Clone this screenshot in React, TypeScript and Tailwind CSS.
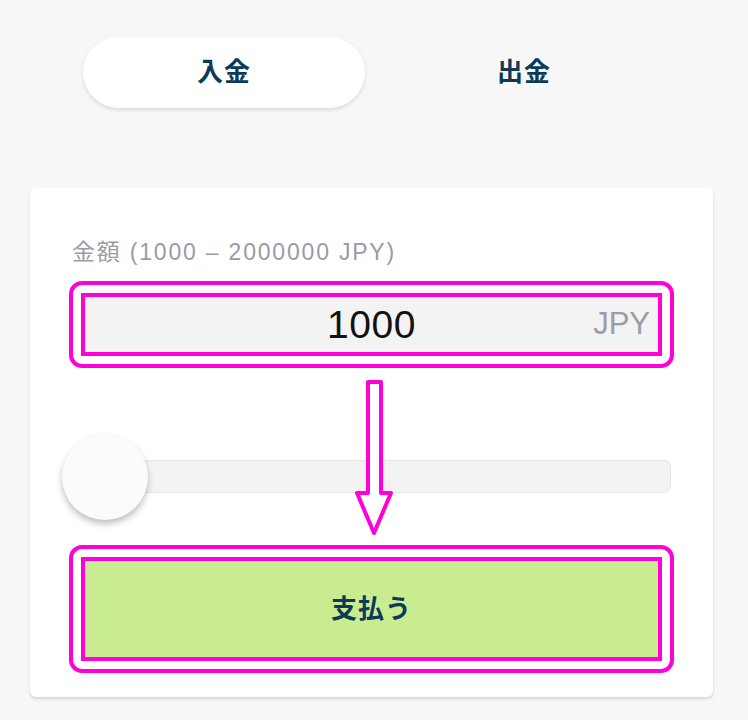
import React from "react";

const FONT = { fontFamily: '"Liberation Sans", "Noto Sans CJK JP", sans-serif' };

export default function App() {
  return (
    <div className="min-h-[720px] w-[748px] bg-[#f7f7f7] overflow-hidden" style={FONT}>
      {/* Tabs */}
      <div className="mx-auto flex w-[600px] pt-[37px]">
        <div className="flex w-[300px] justify-center">
          <div className="flex h-[71px] w-[282px] items-center justify-center rounded-full bg-white shadow-[0_2px_4px_rgba(0,0,0,0.12)]">
            <span className="text-[26px] font-bold tracking-[1px] text-[#0b3b59]">入金</span>
          </div>
        </div>
        <div className="flex w-[300px] justify-center">
          <div className="flex h-[71px] w-[282px] items-center justify-center">
            <span className="text-[26px] font-bold tracking-[1px] text-[#0b3b59]">出金</span>
          </div>
        </div>
      </div>

      {/* Card */}
      <div className="relative ml-[30px] mt-[80px] w-[683px] rounded-[6px] bg-white px-[39px] pb-[24px] pt-[49px] shadow-[0_2px_3px_rgba(0,0,0,0.14)]">
        <div className="h-[30px] pl-[3px] text-[23px] leading-[30px] tracking-[1.8px] text-[#9b9aa8]">
          金額 (1000 – 2000000 JPY)
        </div>

        {/* Input */}
        <div className="mt-[14px] w-[605px] rounded-[13px] border-[4px] border-[#ff00d8] p-[8px]">
          <div className="relative flex h-[63px] items-center justify-center border-[4px] border-[#ff00d8] bg-[#f3f3f3]">
            <span className="text-[39px] leading-none tracking-[0.5px] text-[#111111]">1000</span>
            <span className="absolute right-[8px] top-[11px] text-[31px] leading-none text-[#9d9ca8]">JPY</span>
          </div>
        </div>

        {/* Slider */}
        <div className="relative mt-[66px] h-[86px] w-[609px] -ml-[7px]">
          <div className="absolute left-[40px] right-0 top-[26px] h-[33px] rounded-[7px] border border-[#e6e6e6] bg-[#f3f3f3]" />
          <div className="absolute left-0 top-0 h-[86px] w-[86px] rounded-full bg-[#fbfbfb] shadow-[0_4px_6px_rgba(0,0,0,0.25)]" />
        </div>

        {/* Button */}
        <div className="mt-[25px] w-[605px] rounded-[13px] border-[4px] border-[#ff00d8] p-[8px]">
          <div className="flex h-[104px] items-center justify-center border-[4px] border-[#ff00d8] bg-[#c8ec8f]">
            <span className="text-[26px] font-bold tracking-[1px] text-[#0b3b59]">支払う</span>
          </div>
        </div>

        {/* Arrow annotation */}
        <svg
          className="absolute left-[323px] top-[190px]"
          width="42"
          height="159"
          viewBox="0 0 42 159"
        >
          <polygon
            points="15,4 28,4 28,115 38,115 21,155 4,115 15,115"
            fill="#ffffff"
            stroke="#ff00d8"
            strokeWidth="4"
            strokeLinejoin="round"
          />
        </svg>
      </div>
    </div>
  );
}
